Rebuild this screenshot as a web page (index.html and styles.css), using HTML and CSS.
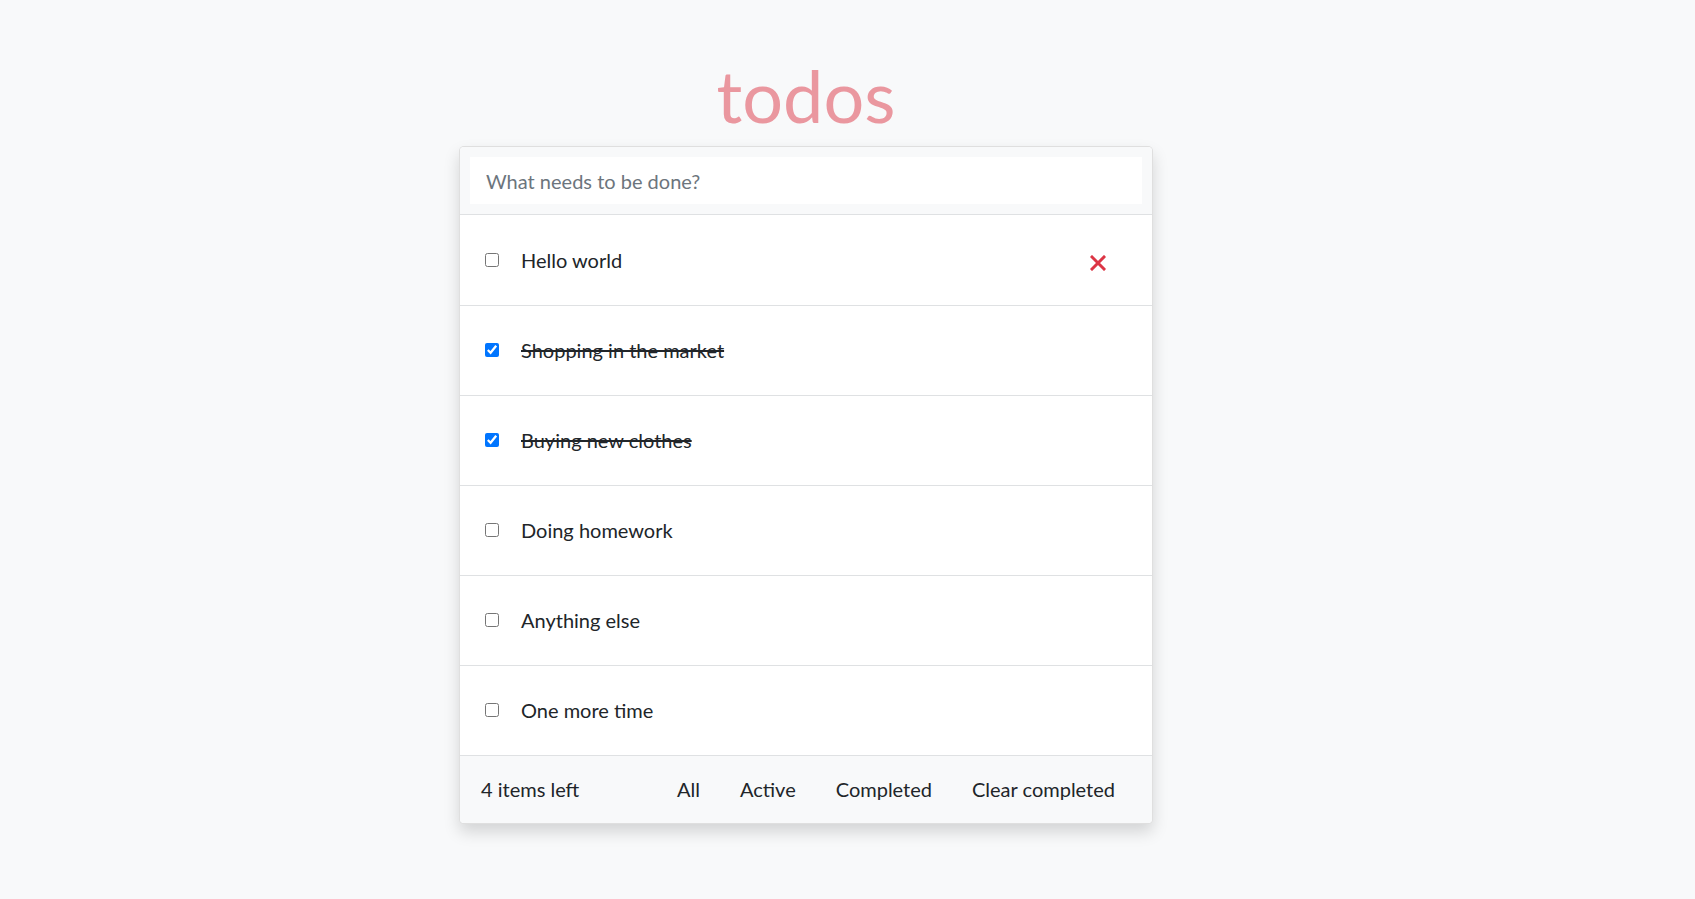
FILE: index.html
```html
<!DOCTYPE html>
<html lang="en">
<head>
<meta charset="utf-8">
<title>todos</title>
<link rel="stylesheet" href="styles.css">
</head>
<body>
<main class="app">
  <h1 class="title">todos</h1>
  <section class="card">
    <header class="card-header">
      <input class="new-todo" type="text" placeholder="What needs to be done?" autofocus>
    </header>
    <ul class="todo-list">
      <li class="todo">
        <input class="toggle" type="checkbox">
        <span class="label">Hello world</span>
        <button class="destroy" aria-label="Delete">
          <svg width="16" height="16" viewBox="0 0 16 16"><path d="M2 2L14 14M14 2L2 14" stroke="#dc3545" stroke-width="3" stroke-linecap="square" fill="none"/></svg>
        </button>
      </li>
      <li class="todo done">
        <input class="toggle" type="checkbox" checked>
        <span class="label">Shopping in the market</span>
      </li>
      <li class="todo done">
        <input class="toggle" type="checkbox" checked>
        <span class="label">Buying new clothes</span>
      </li>
      <li class="todo">
        <input class="toggle" type="checkbox">
        <span class="label">Doing homework</span>
      </li>
      <li class="todo">
        <input class="toggle" type="checkbox">
        <span class="label">Anything else</span>
      </li>
      <li class="todo">
        <input class="toggle" type="checkbox">
        <span class="label">One more time</span>
      </li>
    </ul>
    <footer class="card-footer">
      <span class="count">4 items left</span>
      <nav class="filters">
        <a class="filter">All</a>
        <a class="filter">Active</a>
        <a class="filter">Completed</a>
        <a class="filter clear">Clear completed</a>
      </nav>
    </footer>
  </section>
</main>
</body>
</html>
```

FILE: styles.css
```css
* { box-sizing: border-box; }
html, body {
  margin: 0;
  padding: 0;
  background: #f8f9fa;
  font-family: "Lato", "Open Sans", sans-serif;
  color: #212529;
}
.app {
  width: 694px;
  margin-left: 459px;
  padding-bottom: 40px;
  display: flex;
  flex-direction: column;
}
.title {
  margin: 52px 0 8px;
  font-size: 72px;
  line-height: 1.2;
  font-weight: 400;
  text-align: center;
  color: #ea979f;
}
.card {
  background: #fff;
  border: 1px solid rgba(0,0,0,0.125);
  border-radius: 5px;
  box-shadow: 0 8px 16px rgba(0,0,0,0.15);
  overflow: hidden;
}
.card-header {
  background: #f8f9fa;
  padding: 10px 10px 10px;
  border-bottom: 1px solid #dfe1e3;
}
.new-todo {
  display: block;
  width: 100%;
  height: 47px;
  border: 0;
  outline: none;
  background: #fff;
  padding: 0 16px;
  font-family: inherit;
  font-size: 20px;
  color: #212529;
}
.new-todo::placeholder { color: #6c757d; }
.todo-list {
  list-style: none;
  margin: 0;
  padding: 0;
}
.todo {
  height: 90px;
  display: flex;
  align-items: center;
  padding: 0 25px 2px;
  border-bottom: 1px solid #dfe1e3;
  font-size: 20px;
}
.todo:first-child { height: 91px; padding-bottom: 1px; }
.toggle {
  width: 14px;
  height: 14px;
  margin: 0 22px 0 0;
  flex: none;
}
.done .label { text-decoration: line-through; }
.destroy {
  margin-left: auto;
  margin-right: 21px;
  margin-top: 7px;
  border: 0;
  background: none;
  padding: 0;
  line-height: 0;
}
.card-footer {
  background: #f8f9fa;
  height: 67px;
  display: flex;
  align-items: center;
  padding: 0 37px 2px 21px;
  font-size: 20px;
}
.filters {
  margin-left: auto;
  display: flex;
  gap: 40px;
}
.filter { color: #212529; }
```
